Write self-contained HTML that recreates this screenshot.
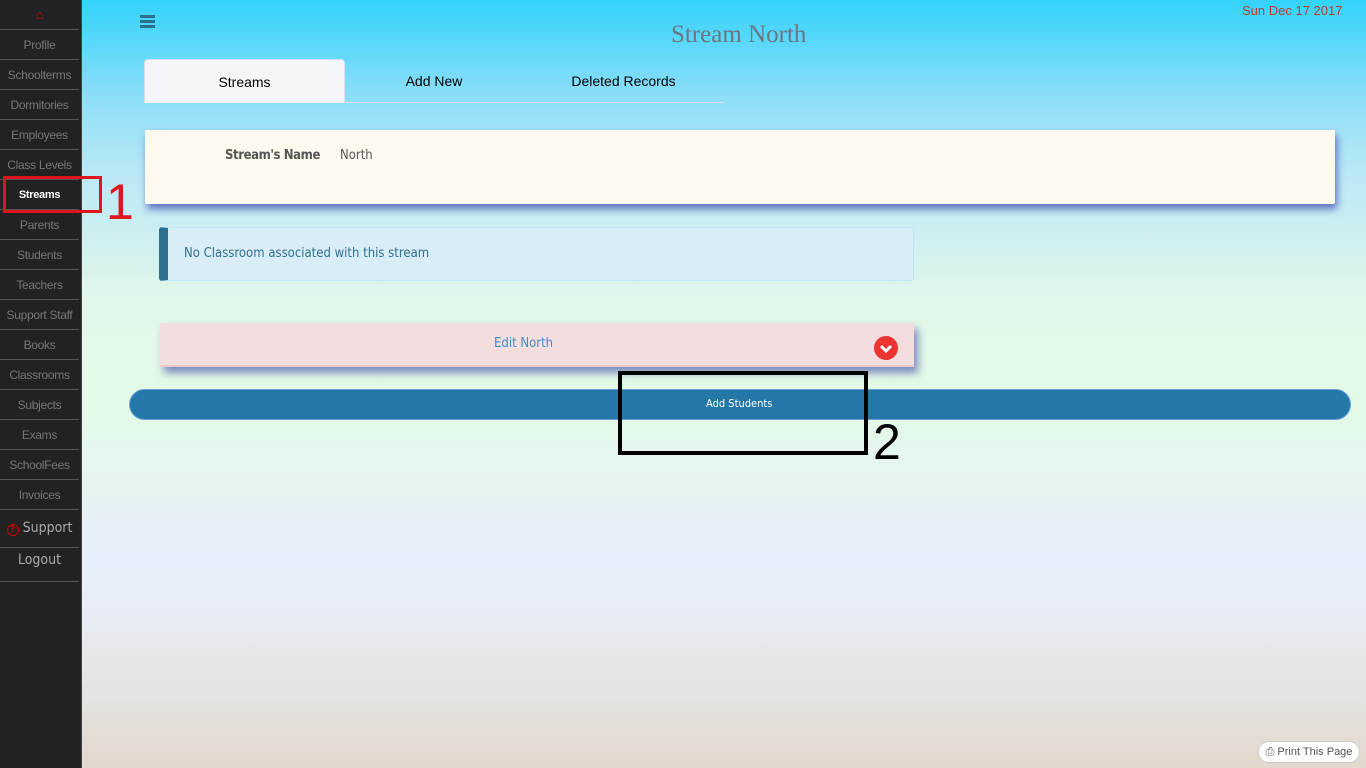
<!DOCTYPE html>
<html><head><meta charset="utf-8"><style>
*{margin:0;padding:0;box-sizing:border-box}
body{width:1366px;height:768px;overflow:hidden;position:relative;font-family:"Liberation Sans",sans-serif;
background:linear-gradient(to bottom,#33d3fb 0px,#8fdff8 100px,#b8e8f6 170px,#e2f6ea 300px,#e4fae6 400px,#e6eefc 560px,#e8ecf4 620px,#e2d8cc 768px);}
#sb{position:absolute;left:0;top:0;width:82px;height:768px;background:#222;border-right:1px solid #444}
#sb div{height:30px;line-height:30px;text-align:center;font-size:12px;color:#777;border-bottom:1px solid #555;margin-right:2px;letter-spacing:-0.3px}
#sb .act{color:#fff;font-weight:bold;font-size:11px}
.abs{position:absolute}
.dc{font-family:'DejaVu Sans Condensed','DejaVu Sans',sans-serif}
</style></head><body>
<div id="sb">
<div style="color:#d00;font-size:13px;font-weight:bold">&#8962;</div>
<div>Profile</div><div>Schoolterms</div><div>Dormitories</div><div>Employees</div><div>Class Levels</div>
<div class="act">Streams</div><div>Parents</div><div>Students</div><div>Teachers</div><div>Support Staff</div>
<div>Books</div><div>Classrooms</div><div>Subjects</div><div>Exams</div><div>SchoolFees</div><div>Invoices</div>
<div class="dc" style="height:38px;line-height:36px;font-size:14px;color:#aaa;letter-spacing:0"><span style="color:#c00;border:1.5px solid #c00;border-radius:50%;font-size:9px;display:inline-block;width:12px;height:12px;line-height:10px;font-weight:bold">?</span> Support</div>
<div class="dc" style="height:34px;line-height:24px;font-size:14px;color:#aaa;letter-spacing:0">Logout</div>
</div>
<div class="abs" style="left:3px;top:176px;width:99px;height:37px;border:3px solid #e0141e"></div>
<div class="abs" style="left:106px;top:174px;font-size:50px;color:#e0141e;line-height:56px">1</div>
<div class="abs" style="left:140px;top:15px;width:15px"><div style="height:3px;background:#2a6f8a;margin-bottom:2px"></div><div style="height:3px;background:#2a6f8a;margin-bottom:2px"></div><div style="height:3px;background:#2a6f8a"></div></div>
<div class="abs" style="left:1242px;top:3px;font-size:13px;color:#c0392b">Sun Dec 17 2017</div>
<div class="abs" style="left:671px;top:21px;font-size:25px;color:#6b7780;font-family:'Liberation Serif',serif">Stream North</div>
<div class="abs" style="left:144px;top:59px;width:201px;height:44px;background:#f4f7fa;border:1px solid #dde;border-bottom:none;border-radius:4px 4px 0 0;text-align:center;line-height:44px;font-size:14px">Streams</div>
<div class="abs" style="left:345px;top:59px;width:178px;height:44px;text-align:center;line-height:44px;font-size:14px;border-bottom:1px solid #dde">Add New</div>
<div class="abs" style="left:523px;top:59px;width:201px;height:44px;text-align:center;line-height:44px;font-size:14px;border-bottom:1px solid #dde">Deleted Records</div>
<div class="abs" style="left:145px;top:130px;width:1190px;height:74px;background:#fdf9ee;box-shadow:2px 5px 8px #5d6fc2;border-radius:2px"></div>
<div class="abs dc" style="left:220px;width:100px;text-align:right;top:148px;font-size:13px;color:#555;font-weight:bold;letter-spacing:-0.4px">Stream's Name</div>
<div class="abs dc" style="left:340px;top:148px;font-size:13px;color:#555">North</div>
<div class="abs" style="left:159px;top:227px;width:755px;height:54px;background:#d9edf6;border:1px solid #bce6f4;border-left:9px solid #2d6f8f;border-radius:3px"></div>
<div class="abs dc" style="left:184px;top:246px;font-size:13px;color:#31708f">No Classroom associated with this stream</div>
<div class="abs" style="left:160px;top:323px;width:754px;height:44px;background:#f2dede;border-bottom:2px solid #e8c8ca;box-shadow:4px 6px 8px #7b8ac0"></div>
<div class="abs dc" style="left:494px;top:336px;font-size:13px;color:#3a8fcf">Edit North</div>
<svg class="abs" style="left:874px;top:336px" width="24" height="24" viewBox="0 0 24 24"><circle cx="12" cy="12" r="12" fill="#ee3333"/><path d="M7 10l5 5 5-5" stroke="#fff" stroke-width="3" fill="none"/></svg>
<div class="abs" style="left:129px;top:389px;width:1222px;height:31px;background:#2577a8;border-radius:16px;border:1px solid #6aa0d8"></div>
<div class="abs dc" style="left:706px;top:397px;font-size:11px;color:#fff">Add Students</div>
<div class="abs" style="left:618px;top:371px;width:250px;height:84px;border:4px solid #000"></div>
<div class="abs" style="left:873px;top:414px;font-size:50px;line-height:56px;color:#000">2</div>
<div class="abs" style="left:1258px;top:741px;width:102px;height:22px;background:#fff;border:1px solid #ccc;border-radius:11px;font-size:11px;color:#555;line-height:20px;text-align:center">&#9113; Print This Page</div>
</body></html>
